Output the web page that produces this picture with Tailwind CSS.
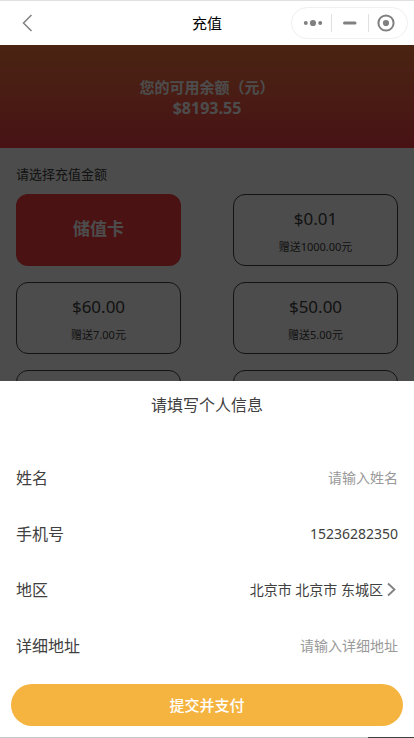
<!DOCTYPE html>
<html lang="zh-CN">
<head>
<meta charset="utf-8">
<meta name="viewport" content="width=device-width, initial-scale=1">
<title>充值</title>
<script src="https://cdn.jsdelivr.net/npm/@tailwindcss/browser@4"></script>
</head>
<body class="flex h-screen flex-col overflow-hidden bg-white font-['Noto_Sans','Noto_Sans_CJK_SC',sans-serif] text-[#404040]">
  <header class="grid h-[45px] shrink-0 grid-cols-[1fr_auto_1fr] items-center border-t border-[#e0e0e0] bg-white">
    <button type="button" aria-label="返回" class="ml-[21px] justify-self-start">
      <svg class="block" width="13" height="18" viewBox="0 0 13 18" fill="none" stroke="#808080" stroke-width="1.5"><path d="M10.5 1 2.5 9l8 8"/></svg>
    </button>
    <h1 class="text-[15px] leading-5 text-black">充值</h1>
    <div class="mr-[6px] flex h-8 w-[117px] items-center justify-self-end rounded-full border border-[#f0f0f0]">
      <button type="button" aria-label="更多" class="flex flex-1 justify-center pl-1">
        <svg width="20" height="18" viewBox="0 0 20 18" fill="#808080"><circle cx="2.8" cy="9" r="2"/><circle cx="10" cy="9" r="3.1"/><circle cx="17.2" cy="9" r="2"/></svg>
      </button>
      <span class="h-[18px] w-px bg-[#e0e0e0]"></span>
      <button type="button" aria-label="最小化" class="flex w-9 justify-center">
        <svg width="18" height="18" viewBox="0 0 18 18"><path d="M3.5 9h10.5" stroke="#808080" stroke-width="3" stroke-linecap="round"/></svg>
      </button>
      <span class="h-[18px] w-px bg-[#e0e0e0]"></span>
      <button type="button" aria-label="关闭" class="flex flex-1 justify-center pr-1">
        <svg width="18" height="18" viewBox="0 0 18 18"><circle cx="9" cy="9" r="7.6" fill="none" stroke="#808080" stroke-width="2"/><circle cx="9" cy="9" r="3.1" fill="#808080"/></svg>
      </button>
    </div>
  </header>

  <div class="relative flex-1 overflow-hidden">
    <main>
      <section class="h-[103px] bg-linear-to-b from-[#f7783c] to-[#f03c49] pt-8 text-center font-bold text-white">
        <p class="text-[15px] leading-5">您的可用余额（元）</p>
        <p class="font-['Open_Sans','Noto_Sans',sans-serif] text-base leading-[22px]">$8193.55</p>
      </section>
      <section class="px-4 pt-4">
        <h2 class="text-[13px] leading-5">请选择充值金额</h2>
        <div class="mt-[10px] grid grid-cols-2 gap-x-[52px] gap-y-4">
          <button type="button" class="h-[72px] rounded-xl bg-[#f73c3c] pb-0.5 text-[17px] font-bold text-white">储值卡</button>
          <button type="button" class="flex h-[72px] flex-col items-center rounded-xl border border-[#404040] pt-3">
            <span class="text-[17px] leading-6">$0.01</span><span class="mt-2 text-[11px] leading-4">赠送1000.00元</span>
          </button>
          <button type="button" class="flex h-[72px] flex-col items-center rounded-xl border border-[#404040] pt-3">
            <span class="text-[17px] leading-6">$60.00</span><span class="mt-2 text-[11px] leading-4">赠送7.00元</span>
          </button>
          <button type="button" class="flex h-[72px] flex-col items-center rounded-xl border border-[#404040] pt-3">
            <span class="text-[17px] leading-6">$50.00</span><span class="mt-2 text-[11px] leading-4">赠送5.00元</span>
          </button>
          <button type="button" aria-label="充值选项" class="h-[72px] rounded-xl border border-[#404040]"></button>
          <button type="button" aria-label="充值选项" class="h-[72px] rounded-xl border border-[#404040]"></button>
        </div>
      </section>
    </main>

    <div class="absolute inset-0 flex flex-col justify-end bg-black/70">
      <form class="bg-white">
        <h2 class="mb-5 text-center text-base leading-[48px]">请填写个人信息</h2>
        <div class="px-4">
          <div class="flex h-14 items-center justify-between pt-0.5">
            <label for="name" class="shrink-0 text-base">姓名</label>
            <input id="name" type="text" placeholder="请输入姓名" class="min-w-0 flex-1 text-right text-sm outline-none placeholder:text-[#999999]">
          </div>
          <div class="flex h-14 items-center justify-between pt-0.5">
            <label for="phone" class="shrink-0 text-base">手机号</label>
            <input id="phone" type="tel" value="15236282350" class="min-w-0 flex-1 text-right text-sm outline-none">
          </div>
          <div class="flex h-14 items-center justify-between pt-0.5">
            <span id="region-label" class="text-base">地区</span>
            <button type="button" aria-labelledby="region-label region" class="flex items-center gap-1 text-sm">
              <span id="region">北京市 北京市 东城区</span>
              <svg width="11" height="16" viewBox="0 0 11 16" fill="none" stroke="#808080" stroke-width="1.8"><path d="m1 1.5 6.5 6L1 13.5"/></svg>
            </button>
          </div>
          <div class="flex h-14 items-center justify-between pt-0.5">
            <label for="address" class="shrink-0 text-base">详细地址</label>
            <input id="address" type="text" placeholder="请输入详细地址" class="min-w-0 flex-1 text-right text-sm outline-none placeholder:text-[#999999]">
          </div>
        </div>
        <div class="px-[11px] py-[11px]">
          <button type="submit" class="h-[42px] w-full rounded-full bg-[#f5b43f] text-[15px] font-medium text-white">提交并支付</button>
        </div>
      </form>
    </div>
  </div>
  <footer class="flex h-px shrink-0 bg-[#c8c8c8]"><span class="ml-auto w-[46px] bg-[#404040]"></span></footer>
</body>
</html>
